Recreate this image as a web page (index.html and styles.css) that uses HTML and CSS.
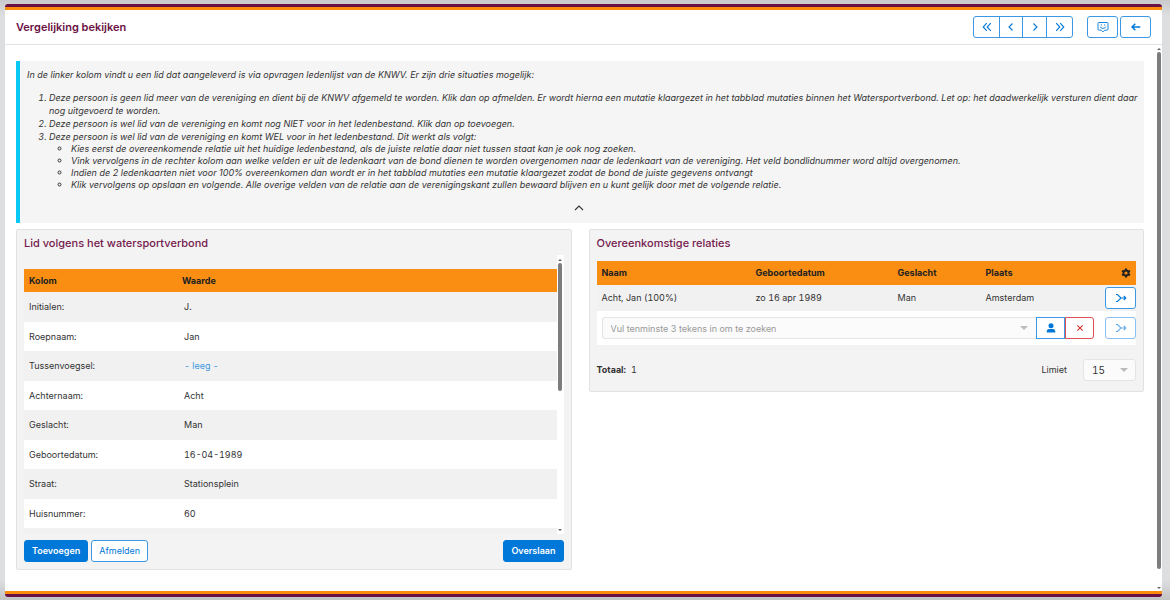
FILE: index.html
```html
<!DOCTYPE html>
<html lang="nl">
    <head>
        <meta charset="UTF-8" />
        <meta name="viewport" content="width=device-width, initial-scale=1.0" />
        <title>Vergelijking bekijken</title>
        <link rel="stylesheet" href="styles.css">
    </head>
    <body>
        <div class="window">
            <header class="topbar">
                <h1>Vergelijking bekijken</h1>
                <div class="btn-group">
                    <button type="button" class="btn" aria-label="Eerste">
                        <svg width="10" height="10" viewBox="0 0 10 10"><path d="M4.800 1.200 1.200 5l3.600 3.800M8.800 1.200 5.200 5l3.600 3.800" /></svg>
                    </button>
                    <button type="button" class="btn" aria-label="Vorige">
                        <svg width="10" height="10" viewBox="0 0 10 10"><path d="M6.500 1.500 3 5l3.500 3.500" /></svg>
                    </button>
                    <button type="button" class="btn" aria-label="Volgende">
                        <svg width="10" height="10" viewBox="0 0 10 10"><path d="M3.500 1.500 7 5 3.500 8.500" /></svg>
                    </button>
                    <button type="button" class="btn" aria-label="Laatste">
                        <svg width="10" height="10" viewBox="0 0 10 10"><path d="M1.200 1.200 4.800 5 1.200 8.800M5.200 1.200 8.800 5 5.200 8.800" /></svg>
                    </button>
                </div>
                <button type="button" class="btn btn-tool" aria-label="Feedback">
                    <svg class="thin" width="12" height="12" viewBox="0 0 12 12"><path d="M1.800 1.500h8.400q.8 0 .8.8v6q0 .8-.8.8H7.800L6 10.900 4.200 9.100H1.800q-.8 0-.8-.8v-6q0-.8.8-.8zM4.300 3.300v1.300M7.700 3.300v1.300M3.300 5.700q.5 1.700 2.700 1.700t2.700-1.700" /></svg>
                </button>
                <button type="button" class="btn btn-tool" aria-label="Terug">
                    <svg class="bold" width="10" height="10" viewBox="0 0 10 10"><path d="M9.300 5H1M4.300 1.700 1 5l3.300 3.300" /></svg>
                </button>
            </header>

            <div class="view">
                <main class="content">
                    <section class="info">
                        <p>In de linker kolom vindt u een lid dat aangeleverd is via opvragen ledenlijst van de KNWV. Er zijn drie situaties mogelijk:</p>
                        <ol>
                            <li>Deze persoon is geen lid meer van de vereniging en dient bij de KNWV afgemeld te worden. Klik dan op afmelden. Er wordt hierna een mutatie klaargezet in het tabblad mutaties binnen het Watersportverbond. Let op: het daadwerkelijk versturen dient daar nog uitgevoerd te worden.</li>
                            <li>Deze persoon is wel lid van de vereniging en komt nog NIET voor in het ledenbestand. Klik dan op toevoegen.</li>
                            <li>Deze persoon is wel lid van de vereniging en komt WEL voor in het ledenbestand. Dit werkt als volgt:
                                <ul>
                                    <li>Kies eerst de overeenkomende relatie uit het huidige ledenbestand, als de juiste relatie daar niet tussen staat kan je ook nog zoeken.</li>
                                    <li>Vink vervolgens in de rechter kolom aan welke velden er uit de ledenkaart van de bond dienen te worden overgenomen naar de ledenkaart van de vereniging. Het veld bondlidnummer word altijd overgenomen.</li>
                                    <li>Indien de 2 ledenkaarten niet voor 100% overeenkomen dan wordt er in het tabblad mutaties een mutatie klaargezet zodat de bond de juiste gegevens ontvangt</li>
                                    <li>Klik vervolgens op opslaan en volgende. Alle overige velden van de relatie aan de verenigingskant zullen bewaard blijven en u kunt gelijk door met de volgende relatie.</li>
                                </ul>
                            </li>
                        </ol>
                        <button type="button" class="collapse" aria-label="Inklappen">
                            <svg width="10" height="6" viewBox="0 0 10 6"><path d="M1 5l4-4 4 4" /></svg>
                        </button>
                    </section>

                    <div class="panels">
                        <section class="panel">
                            <h2>Lid volgens het watersportverbond</h2>
                            <div class="scroller">
                                <table class="fields">
                                    <thead>
                                        <tr><th>Kolom</th><th>Waarde</th></tr>
                                    </thead>
                                    <tbody>
                                        <tr><td>Initialen:</td><td>J.</td></tr>
                                        <tr><td>Roepnaam:</td><td>Jan</td></tr>
                                        <tr><td>Tussenvoegsel:</td><td class="empty">- leeg -</td></tr>
                                        <tr><td>Achternaam:</td><td>Acht</td></tr>
                                        <tr><td>Geslacht:</td><td>Man</td></tr>
                                        <tr><td>Geboortedatum:</td><td>16-04-1989</td></tr>
                                        <tr><td>Straat:</td><td>Stationsplein</td></tr>
                                        <tr><td>Huisnummer:</td><td>60</td></tr>
                                    </tbody>
                                </table>
                                <div class="scrollbar">
                                    <span class="arrow-up"></span>
                                    <span class="thumb"></span>
                                    <span class="arrow-down"></span>
                                </div>
                            </div>
                            <div class="actions">
                                <button type="button" class="btn btn-primary">Toevoegen</button>
                                <button type="button" class="btn">Afmelden</button>
                                <button type="button" class="btn btn-primary skip">Overslaan</button>
                            </div>
                        </section>

                        <section class="panel">
                            <h2>Overeenkomstige relaties</h2>
                            <table class="relations">
                                <colgroup>
                                    <col class="col-name">
                                    <col class="col-birth">
                                    <col class="col-sex">
                                    <col class="col-city">
                                    <col class="col-action">
                                </colgroup>
                                <thead>
                                    <tr>
                                        <th>Naam</th>
                                        <th>Geboortedatum</th>
                                        <th>Geslacht</th>
                                        <th>Plaats</th>
                                        <th class="gear">
                                            <svg class="fill" width="10" height="10" viewBox="0 0 20 20"><path fill-rule="evenodd" d="M8 1h4l.5 2.700 1.800 1 2.600-.9 2 3.400-2.100 1.800v2l2.100 1.800-2 3.400-2.600-.9-1.800 1L12 19H8l-.5-2.700-1.800-1-2.600.9-2-3.400L3.200 11V9L1.100 7.200l2-3.400 2.600.9 1.800-1zM10 6.800a3.200 3.200 0 1 0 0 6.400 3.200 3.200 0 0 0 0-6.400z" /></svg>
                                        </th>
                                    </tr>
                                </thead>
                                <tbody>
                                    <tr>
                                        <td>Acht, Jan (100%)</td>
                                        <td>zo 16 apr 1989</td>
                                        <td>Man</td>
                                        <td>Amsterdam</td>
                                        <td class="merge">
                                            <button type="button" class="btn btn-tool" aria-label="Samenvoegen">
                                                <svg width="12" height="10" viewBox="0 0 12 10"><path d="M1 1.500h1.500L6 5l-3.500 3.500H1M6 5h4.500M8.800 3 10.800 5 8.800 7" /></svg>
                                            </button>
                                        </td>
                                    </tr>
                                    <tr class="search-row">
                                        <td colspan="4">
                                            <div class="search">
                                                <div class="dropdown">
                                                    <input type="text" aria-label="Relatie zoeken" placeholder="Vul tenminste 3 tekens in om te zoeken">
                                                </div>
                                                <button type="button" class="btn" aria-label="Relatie kiezen">
                                                    <svg class="fill" width="10" height="10" viewBox="0 0 10 10"><circle cx="5" cy="2.800" r="2.500" /><path d="M.8 9.500V8.300Q.8 6 3.200 6h3.600q2.400 0 2.400 2.300v1.200z" /></svg>
                                                </button>
                                                <button type="button" class="btn btn-danger" aria-label="Wissen">
                                                    <svg width="8" height="8" viewBox="0 0 8 8"><path d="M1.300 1.300l5.400 5.400M6.700 1.300 1.300 6.700" /></svg>
                                                </button>
                                            </div>
                                        </td>
                                        <td class="merge">
                                            <button type="button" class="btn btn-tool" aria-label="Samenvoegen" disabled>
                                                <svg width="12" height="10" viewBox="0 0 12 10"><path d="M1 1.500h1.500L6 5l-3.500 3.500H1M6 5h4.500M8.800 3 10.800 5 8.800 7" /></svg>
                                            </button>
                                        </td>
                                    </tr>
                                </tbody>
                            </table>
                            <div class="summary">
                                <strong>Totaal:</strong>
                                <span>1</span>
                                <label for="limit">Limiet</label>
                                <div class="dropdown limit">
                                    <select id="limit">
                                        <option>15</option>
                                    </select>
                                </div>
                            </div>
                        </section>
                    </div>
                </main>
                <div class="scrollbar page-scrollbar">
                    <span class="arrow-up"></span>
                    <span class="thumb"></span>
                    <span class="arrow-down"></span>
                </div>
            </div>
        </div>
    </body>
</html>
```
FILE: styles.css
```css
* {
    box-sizing: border-box;
}

body {
    display: flex;
    height: 100vh;
    margin: 0;
    padding: 4px 8px 3px 5px;
    font-family: Inter, "Liberation Sans", sans-serif;
    font-size: 9px;
    line-height: 12px;
    color: #333;
    background: linear-gradient(#c8cacb, #dddee0 16px, #dddee0 580px, #c2c4c4);
}

h1,
h2,
p,
ol,
ul {
    margin: 0;
}

/* window with the purple / orange edges */
.window {
    display: flex;
    flex-direction: column;
    flex: 1;
    min-width: 0;
    border-top: 3px solid #6b1045;
    border-bottom: 3px solid #6b1045;
    border-radius: 3px;
    background-color: #fff;
    overflow: hidden;
}

.topbar {
    display: flex;
    align-items: center;
    gap: 2px;
    height: 38px;
    padding: 0 11px;
    border-top: 3px solid #fb8c0c;
    border-bottom: 1px solid #e2e2e2;
}

h1 {
    margin-right: auto;
    font-size: 11px;
    font-weight: 600;
    color: #6b1045;
}

h2 {
    font-size: 11px;
    font-weight: 500;
    line-height: 16px;
    color: #731a4e;
}

svg {
    display: block;
    fill: none;
    stroke: currentColor;
    stroke-width: 1.1;
}

svg.thin {
    stroke-width: 0.9;
}

svg.bold {
    stroke-width: 1.5;
}

svg.fill {
    fill: currentColor;
    stroke: none;
}

/* buttons */
.btn {
    display: flex;
    align-items: center;
    justify-content: center;
    height: 22px;
    padding: 0 7px;
    border: 1px solid #3d98e4;
    border-radius: 3px;
    font: inherit;
    color: #0078d9;
    background-color: #fff;
}

.btn-tool {
    width: 31px;
    padding: 0;
}

.btn-primary {
    border-color: #0078d9;
    font-weight: 600;
    color: #fff;
    background-color: #0078d9;
}

.btn-danger {
    border-color: #e0525a;
    color: #d32f38;
}

.btn:disabled {
    opacity: 0.6;
}

.btn-group {
    display: flex;
    margin-right: 12px;
}

.btn-group .btn {
    width: 24px;
    margin-left: -1px;
    padding: 0;
    border-radius: 0;
}

.btn-group .btn:first-child {
    width: 27px;
    border-radius: 3px 0 0 3px;
}

.btn-group .btn:nth-child(3) {
    width: 25px;
}

.btn-group .btn:last-child {
    width: 27px;
    border-radius: 0 3px 3px 0;
}

.view {
    display: flex;
    flex: 1;
    min-height: 0;
    border-bottom: 3px solid #fb8c0c;
}

.content {
    flex: 1;
    min-width: 0;
    padding: 16px 11px 0;
    overflow: hidden;
}

/* explanation */
.info {
    padding: 8px 14px 12px 7px;
    border-left: 4px solid #08c8f5;
    font-style: italic;
    background-color: #f5f5f5;
}

.info ol {
    margin: 10px -10px 0 0;
    padding-left: 22px;
    line-height: 13px;
}

.info ul {
    padding-left: 22px;
    line-height: 12px;
}

.collapse {
    display: block;
    margin: 14px auto 0;
    padding: 0;
    border: 0;
    color: #333;
    background: none;
}

/* panels */
.panels {
    display: grid;
    grid-template-columns: 1fr 1fr;
    align-items: start;
    gap: 17px;
    margin-top: 6px;
}

.panel {
    padding: 5px 7px 7px;
    border: 1px solid #e2e2e2;
    border-radius: 2px;
    font-variant-numeric: tabular-nums;
    background-color: #f3f3f3;
}

table {
    width: 100%;
    border-spacing: 0;
}

th,
td {
    padding: 0 5px;
    text-align: left;
}

th {
    font-weight: 700;
    color: #222;
    background-color: #f98e12;
}

.scroller {
    display: flex;
    height: 279px;
    margin-top: 4px;
    overflow: hidden;
    background-color: #f1f1f1;
}

.fields {
    height: 0;
    border-top: 14px solid #f3f3f3;
}

.fields th {
    width: 153px;
    height: 23px;
}

.fields th:last-child {
    width: auto;
}

.fields td {
    height: 29px;
    background-color: #fff;
}

.fields td:last-child {
    padding-left: 7px;
}

.fields tr:nth-child(odd) td {
    height: 30px;
    background-color: #f1f1f1;
}

.fields .empty {
    color: #3d98e4;
}

/* scrollbars */
.scrollbar {
    display: flex;
    flex-direction: column;
    align-items: center;
    flex: none;
    width: 7px;
    padding: 4px 0 3px;
    background-color: #fff;
}

.thumb {
    width: 4px;
    height: 128px;
    margin-top: 2px;
    border-radius: 2px;
    background-color: #7d7d7d;
}

.arrow-up,
.arrow-down {
    border: 2px solid transparent;
}

.arrow-up {
    border-top: 0;
    border-bottom-color: #666;
}

.arrow-down {
    margin-top: auto;
    border-bottom: 0;
    border-top-color: #666;
}

.page-scrollbar {
    padding-top: 3px;
    padding-bottom: 2px;
}

.page-scrollbar .thumb {
    flex: 1;
    margin-bottom: 18px;
}

.actions {
    display: flex;
    gap: 3px;
    margin-top: 6px;
}

.skip {
    margin-left: auto;
}

/* matching relations */
.relations {
    table-layout: fixed;
    margin-top: 10px;
}

.relations th {
    height: 24px;
}

.relations td {
    height: 26px;
    background-color: #f1f1f1;
}

.relations .search-row td {
    height: 34px;
    background-color: #fff;
}

.col-name {
    width: 154px;
}

.col-birth {
    width: 142px;
}

.col-sex {
    width: 88px;
}

.col-action {
    width: 41px;
}

.gear svg {
    margin-left: auto;
}

.relations .merge {
    padding: 0;
}

.merge .btn {
    margin-left: auto;
}

.search {
    display: flex;
    margin-right: -4px;
}

.search .btn {
    width: 29px;
    padding: 0;
    border-radius: 0;
}

.search .btn-danger {
    border-radius: 0 3px 3px 0;
}

.dropdown {
    position: relative;
    flex: 1;
}

.dropdown::after {
    content: "";
    position: absolute;
    top: 9px;
    right: 8px;
    border: 4px solid transparent;
    border-top-color: #bbb;
    border-bottom: 0;
    pointer-events: none;
}

.dropdown input,
.dropdown select {
    display: block;
    width: 100%;
    height: 22px;
    padding: 0 8px;
    border: 1px solid #e4e4e4;
    border-radius: 3px;
    font: inherit;
    color: #333;
    background-color: #fbfbfb;
    appearance: none;
}

.dropdown input {
    border-right: 0;
    border-radius: 3px 0 0 3px;
}

.dropdown input::placeholder {
    color: #999;
}

.summary {
    display: flex;
    align-items: center;
    gap: 5px;
    margin-top: 14px;
    padding-bottom: 3px;
}

.summary label {
    margin-left: auto;
}

.dropdown.limit {
    flex: none;
    width: 53px;
    margin-left: 11px;
}

.limit select {
    font-size: 10px;
}
```
